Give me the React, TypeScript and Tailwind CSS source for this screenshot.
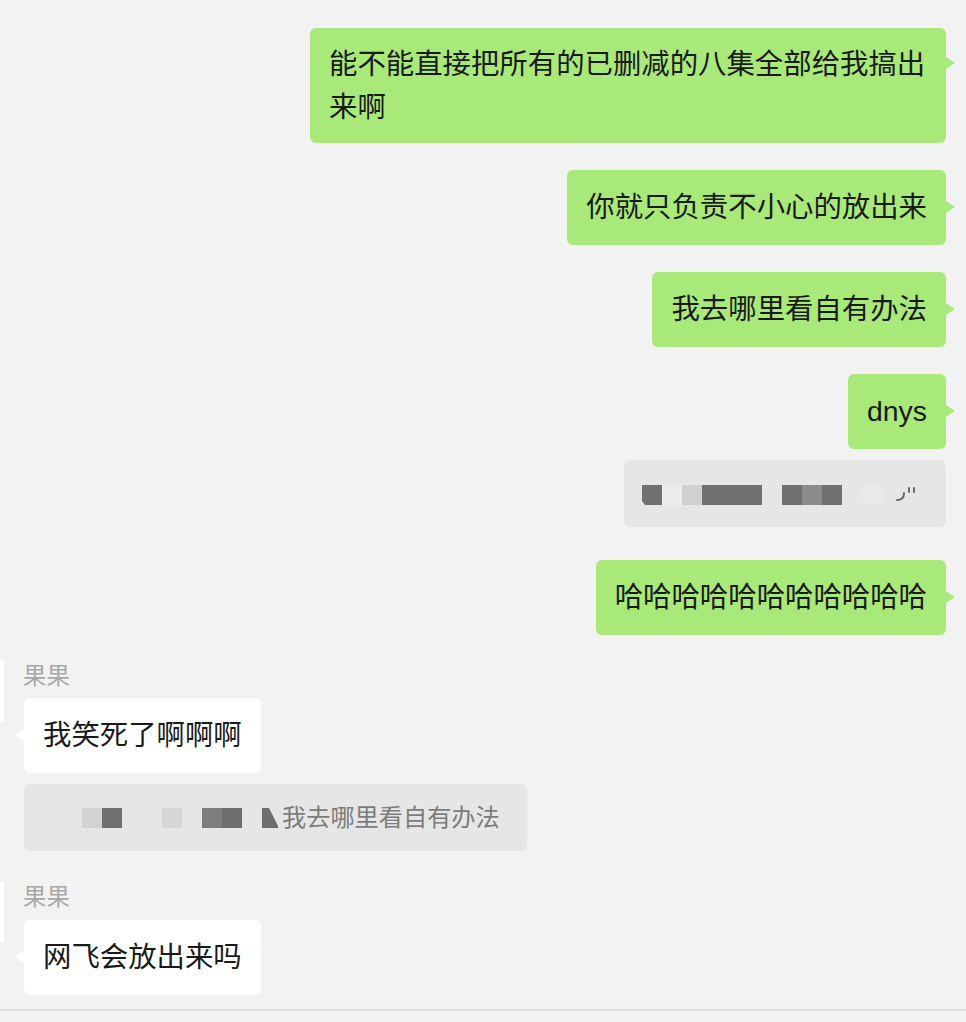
import type { ReactNode } from "react";

function Sent({ children, tailTop = "top-[31px]", className = "" }: { children: ReactNode; tailTop?: string; className?: string }) {
  return (
    <div className={`relative max-w-[636px] rounded-[6px] bg-[#a9e97a] px-[19px] py-4 text-[28.4px] leading-[43px] text-[#1a1a1a] ${className}`}>
      {children}
      <span className={`absolute left-full ${tailTop} h-0 w-0 border-y-[6px] border-l-[9px] border-y-transparent border-l-[#a9e97a]`} />
    </div>
  );
}

function Received({ children }: { children: ReactNode }) {
  return (
    <div className="relative w-fit rounded-[6px] bg-white px-[19px] py-4 text-[28.4px] leading-[43px] text-[#1a1a1a]">
      {children}
      <span className="absolute right-full top-[31px] h-0 w-0 border-y-[6px] border-r-[9px] border-y-transparent border-r-white" />
    </div>
  );
}

function Block({ w = "w-[20px]", c }: { w?: string; c: string }) {
  return <div className={`h-[20px] ${w} ${c}`} />;
}

export default function App() {
  return (
    <div className="min-h-screen overflow-hidden bg-[#f2f2f2] font-['Liberation_Sans','Noto_Sans_CJK_SC',sans-serif]">
      <div className="flex flex-col items-end pr-[20px] pt-[28px]">
        <Sent className="pb-[14px] pt-[15px]" tailTop="top-[29px]">
          能不能直接把所有的已删减的八集全部给我搞出来啊
        </Sent>
        <Sent className="mt-[27px]">你就只负责不小心的放出来</Sent>
        <Sent className="mt-[27px]">我去哪里看自有办法</Sent>
        <Sent className="mt-[27px]">dnys</Sent>

        <div className="mt-[11px] flex h-[67px] w-[322px] items-center rounded-[6px] bg-[#e6e6e6] pl-[18px] pt-[3px]">
          <div className="h-[20px] w-[20px] bg-[#707070] [clip-path:polygon(0_0,100%_0,100%_100%,15%_100%,0_80%)]" />
          <Block c="bg-[#ececec]" />
          <Block c="bg-[#d0d0d0]" />
          <Block w="w-[60px]" c="bg-[#707070]" />
          <div className="w-[20px]" />
          <Block c="bg-[#707070]" />
          <Block c="bg-[#8b8b8b]" />
          <Block c="bg-[#707070]" />
          <div className="w-[20px]" />
          <div className="h-[20px] w-[20px] rounded-[4px] bg-[#e9e9e9]" />
          <svg className="ml-[13px]" width="24" height="20" viewBox="0 0 24 20" fill="none" stroke="#6a6a6a" strokeWidth="2" strokeLinecap="round">
            <path d="M9 8 Q9 15 2 15" />
            <path d="M14 3 L14 7" />
            <path d="M19 3 L19 7" />
          </svg>
        </div>

        <Sent className="mt-[33px]">哈哈哈哈哈哈哈哈哈哈哈</Sent>
      </div>

      <div className="mt-[25px] flex items-start">
        <div className="h-[62px] w-[4px] rounded-r-[3px] bg-white" />
        <div className="ml-[20px] flex flex-col pt-[2px]">
          <div className="-ml-px h-[28px] text-[23.5px] leading-[28px] text-[#a8a8a8]">果果</div>
          <div className="mt-[8px]">
            <Received>我笑死了啊啊啊</Received>
          </div>
          <div className="mt-[11px] flex h-[67px] w-[503px] items-center rounded-[6px] bg-[#e6e6e6] pl-[58px]">
            <Block c="bg-[#d3d3d3]" />
            <Block c="bg-[#707070]" />
            <div className="w-[40px]" />
            <div className="h-[20px] w-[20px] rounded-[2px] bg-[#d6d6d6]" />
            <div className="w-[20px]" />
            <Block c="bg-[#7d7d7d]" />
            <Block c="bg-[#6e6e6e]" />
            <div className="w-[20px]" />
            <svg width="16" height="20" viewBox="0 0 16 20">
              <polygon points="0,0 7,0 16,18 16,20 0,20" fill="#6e6e6e" />
            </svg>
            <span className="ml-[4px] text-[24.2px] leading-[30px] text-[#7c7c7c]">我去哪里看自有办法</span>
          </div>
        </div>
      </div>

      <div className="mt-[30px] flex items-start">
        <div className="h-[62px] w-[4px] rounded-r-[3px] bg-white" />
        <div className="ml-[20px] flex flex-col pt-[2px]">
          <div className="-ml-px h-[28px] text-[23.5px] leading-[28px] text-[#a8a8a8]">果果</div>
          <div className="mt-[9px]">
            <Received>网飞会放出来吗</Received>
          </div>
        </div>
      </div>

      <div className="mt-[14px] h-[2px] w-full bg-[#dedede]" />
    </div>
  );
}
